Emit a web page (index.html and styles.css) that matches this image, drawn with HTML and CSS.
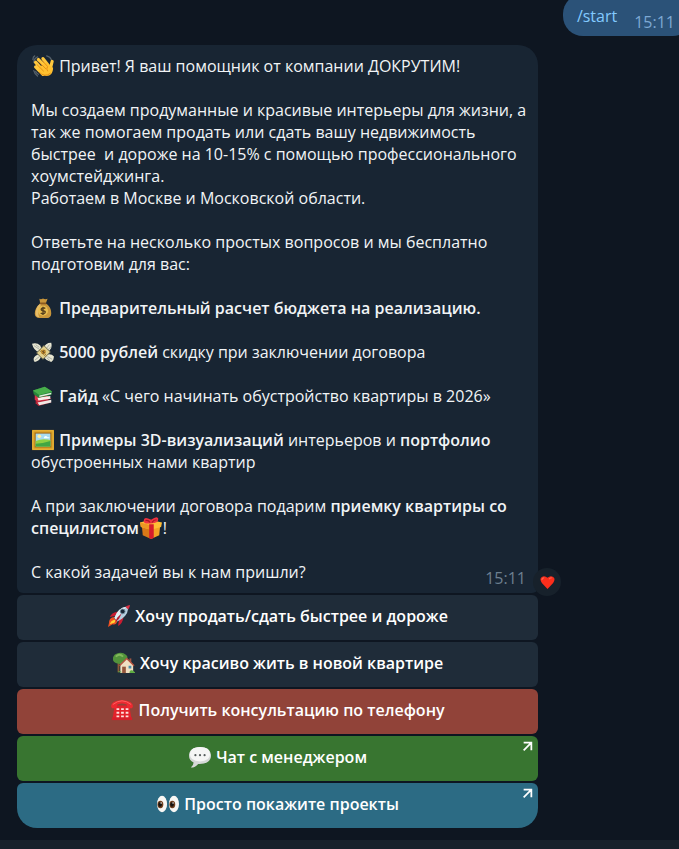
FILE: index.html
```
<!DOCTYPE html>
<html lang="ru">
<head>
<meta charset="utf-8">
<meta name="viewport" content="width=device-width, initial-scale=1">
<title>ДОКРУТИМ</title>
<link rel="stylesheet" href="styles.css">
</head>
<body>
<main class="chat">
  <div class="outgoing">
    <a class="command" href="#start">/start</a>
    <time class="time time-out">15:11</time>
  </div>

  <section class="incoming">
    <article class="bubble">
      <p><svg class="emoji" viewBox="0 0 24 24" aria-hidden="true"><path d="M2 8Q2 4 6 2M1 5Q1 2 3 1M16 1Q20 2 21 5M2 17Q3 21 6 23M4 18Q5 20 7 21" fill="none" stroke="#56616b" stroke-width="1.4" stroke-linecap="round"/><g fill="none" stroke="#ffc83d" stroke-width="3.6" stroke-linecap="round"><path d="M4 13l8 8M4 8l9 10M7 5l9 9M12 4l7 9"/><path d="M20 15l2-8" stroke-width="3.400"/></g><path d="M8 13l8-5 4 4 3 2c0 6-3 9-7 9-3 0-5-2-9-6z" fill="#ffc02f"/><path d="M5.500 10.500l7 7M7.500 7.500l7.500 7.500M11.500 6.500l5.500 6q-2 3 0 5M8 19q6 6 12 1" fill="none" stroke="#e48c15" stroke-width="1" stroke-linecap="round"/></svg> Привет! Я ваш помощник от компании ДОКРУТИМ!</p>
      <p>Мы создаем продуманные и красивые интерьеры для жизни, а так же помогаем продать или сдать вашу недвижимость быстрее&nbsp; и дороже на 10-15% с помощью профессионального хоумстейджинга.<br>Работаем в Москве и Московской области.</p>
      <p>Ответьте на несколько простых вопросов и мы бесплатно подготовим для вас:</p>
      <p><svg class="emoji" viewBox="0 0 24 24" aria-hidden="true"><path d="M8 2q2 1 4-.5 2 1.500 5 .5l-2 5c5 3 6 7 6 11 0 3-2 5-4 5H8c-3 0-5-2-5-5 0-4 2-8 6-11z" fill="#c9963b"/><path d="M9 7q-5 4-5 11 0 4 4 4Q5 17 10 8z" fill="#e6bd69"/><path d="M8.500 6h7v2h-7z" fill="#8b5a20"/><circle cx="12" cy="15" r="5.500" fill="#e9bd4f"/><path d="M14.500 12.500q-2-1.500-4 0-1.500 2 1.500 2.500 3.500.5 2 2.500-2 1.500-4.500 0M12 10.500v9" fill="none" stroke="#57401d" stroke-width="1.500"/></svg> <b>Предварительный расчет бюджета на реализацию.</b></p>
      <p><svg class="emoji" viewBox="0 0 24 24" aria-hidden="true"><path d="M0 3q5-2 9 2l2 5-3 2Q2 11 0 3zM13 8q1-6 8-6 2 6-4 10zM15 15q6-2 9 2 0 4-3 6-5-1-8-5zM10 17q-2 5-7 6-3-4 1-7l4-2z" fill="#e8e6d1"/><path d="M2 5l6 4M4 4l4 3M19 4l-4 5M21 6l-4 4M17 17l5 3M16 18l4 4M8 17l-5 4" fill="none" stroke="#a5aaa2" stroke-width="1"/><path d="M5 13l8-8 7 7-8 8z" fill="#e1cf8d" stroke="#6c694b"/><path d="M9 9l7 7M8 10l7 7" stroke="#997c38"/><circle cx="12.500" cy="12" r="2.700" fill="#c28c2d"/><path d="M13.500 10.500l-2 1 2 1-2 1" fill="none" stroke="#5b4322"/></svg> <b>5000 рублей</b> скидку при заключении договора</p>
      <p><svg class="emoji" viewBox="0 0 24 24" aria-hidden="true"><path d="M4 16l13-1 4 4-14 4-3-3z" fill="#b52234"/><path d="M6 19l15-3v3L8 22z" fill="#eee8e4"/><path d="M3 11l14 1 4 3-15 3-3-2z" fill="#d9344a"/><path d="M6 14l14-2v3L7 17z" fill="#f7efea"/><path d="M1 6L14 2l8 5-1 4-14 3-5-4z" fill="#26853a"/><path d="M1 6L14 2l8 5-14 4z" fill="#48ae4b"/><path d="M8 11.500l13-3v1.500L8 13z" fill="#e7eee1"/></svg> <b>Гайд</b> «С чего начинать обустройство квартиры в 2026»</p>
      <p><svg class="emoji" viewBox="0 0 24 24" aria-hidden="true"><path d="M0 1h24v22H0z" fill="#d39a25"/><path d="M1 2h22v20H1z" fill="none" stroke="#f1bd3e"/><path d="M3 4h18v16H3z" fill="#9c6617"/><path d="M4 5h16v14H4z" fill="#a8dcf0"/><circle cx="8" cy="8" r="2" fill="#fff1a5"/><path d="M13 9q2-3 4 0h2v1h-6z" fill="#f4ffff"/><path d="M4 13q7-3 16-1v7H4z" fill="#8fd143"/><path d="M4 16q7 0 16-3v6H4z" fill="#41a743"/></svg> <b>Примеры 3D-визуализаций</b> интерьеров и <b>портфолио</b> обустроенных нами квартир</p>
      <p>А при заключении договора подарим <b>приемку квартиры со специлистом</b><svg class="emoji" viewBox="0 0 24 24" aria-hidden="true"><path d="M2 9l10 3v12l-9-4z" fill="#d97918"/><path d="M12 12l10-3-1 11-9 4z" fill="#f4a125"/><path d="M0 6l11-3 13 3-1 5-11 3L1 11z" fill="#ffbd35"/><path d="M0 6l12 3v5L1 11z" fill="#ed9723"/><path d="M10 8h5v15l-3 1-2-1z" fill="#d61c2c"/><path d="M11 7Q4 8 4 4q0-5 8-1 7-5 8-1 0 5-8 5z" fill="#ef3340"/><path d="M6 4q3-1 5 2M18 3q-3 0-5 3" fill="none" stroke="#a51625" stroke-width="1.300"/></svg>!</p>
      <div class="closing">
        <p>С какой задачей вы к нам пришли?</p>
        <time class="time">15:11</time>
      </div>
      <button class="reaction" type="button" aria-label="Нравится"><svg class="heart" viewBox="0 0 16 16" aria-hidden="true"><path d="M8 15L2 8.500Q-1 4 2 2q3-2 6 1 3-3 6-1 3 2 0 6.500z" fill="#fb2e1c"/><path d="M2 5q0-2 2-2M10 4q1-1 2-1" fill="none" stroke="#ff7662" stroke-linecap="round"/></svg></button>
    </article>

    <div class="keyboard">
      <button class="key" type="button"><svg class="emoji" viewBox="0 0 24 24" aria-hidden="true"><path d="M1 20q0-6 5-7l4 5q-1 4-5 3l-5 3z" fill="#f05022"/><path d="M2 21q1-4 5-5l2 2q-2 2-4 2z" fill="#ffd232"/><path d="M11 7Q4 8 2 13l6-1zM17 13q-1 7-6 10l1-7z" fill="#c91c31"/><path d="M7 14Q11 3 20 2l2 2q-1 9-12 14z" fill="#b6cfdf"/><path d="M7 14Q11 3 20 2 15 7 9 16z" fill="#e4eff5"/><path d="M19 2q3-2 5-2 0 2-2 5z" fill="#dc3144"/><path d="M10 14l5-5-3 6-5 5z" fill="#b51c31"/><circle cx="16" cy="7" r="2.600" fill="#182635" stroke="#728d9f"/></svg> Хочу продать/сдать быстрее и дороже</button>
      <button class="key" type="button"><svg class="emoji" viewBox="0 0 24 24" aria-hidden="true"><path d="M5 10h2v12H5z" fill="#8a5b35"/><path d="M3 12Q-1 10 0 6q1-4 6-5 5-1 8 2 3 2 1 5-3 5-8 5z" fill="#52933b"/><path d="M3 5q4-4 8 0" fill="none" stroke="#82b85b" stroke-width="2"/><path d="M18 7h2v5h-2z" fill="#9f5743"/><path d="M8 13l7-6 7 7v9H8z" fill="#f0dfc2"/><path d="M7 15l8-8 8 8" fill="none" stroke="#b4533f" stroke-width="1.500"/><path d="M10 16h4v7h-4z" fill="#93553a"/><path d="M17 15h3v3h-3z" fill="#4a8baa"/><path d="M5 22q2-2 5 0M18 23q0-4 3-3l3 2v1z" fill="#5fae43"/></svg> Хочу красиво жить в новой квартире</button>
      <button class="key key-red" type="button"><svg class="emoji" viewBox="0 0 24 24" aria-hidden="true"><path d="M4 7h16l2 13v3H2v-3z" fill="#e3222b"/><path d="M0 8q0-6 12-7 12 1 12 7l-1 2h-5l-1-4Q12 4 7 6l-1 4H1z" fill="#ed2930"/><path d="M2 6q10-8 20 0" fill="none" stroke="#ff6563"/><path d="M1 20h22v3H1z" fill="#d51f2a"/><path d="M6 10h3v2H6zm5 0h3v2h-3zm5 0h3v2h-3zM6 14h3v2H6zm5 0h3v2h-3zm5 0h3v2h-3zM6 18h3v2H6zm5 0h3v2h-3zm5 0h3v2h-3z" fill="#ffe0dc"/></svg> Получить консультацию по телефону</button>
      <a class="key key-green" href="#manager"><svg class="emoji" viewBox="0 0 24 24" aria-hidden="true"><path d="M12 1C4 1 0 5 0 10.500q0 5 5 7.500 0 3-3 5.500 5 0 8-4C19 20 24 16 24 10.500 24 5 20 1 12 1z" fill="#d5d8d7"/><path d="M12 1C4 1 1 5 1 9q0 7 11 8 11-1 11-8 0-8-11-8z" fill="#f5f6f5"/><g fill="#555b5b"><circle cx="7" cy="10" r="1.200"/><circle cx="12" cy="10" r="1.200"/><circle cx="17" cy="10" r="1.200"/></g></svg> Чат с менеджером<svg class="arrow" viewBox="0 0 10 10" aria-hidden="true"><path d="M1.500 1.500h7v7M8.500 1.500L1.500 8.500" fill="none" stroke="currentColor" stroke-width="1.600"/></svg></a>
      <a class="key key-blue" href="#projects"><svg class="emoji" viewBox="0 0 24 24" aria-hidden="true"><ellipse cx="5.500" cy="12" rx="5.500" ry="9" fill="#f8f7f4"/><ellipse cx="18.500" cy="12" rx="5.500" ry="9" fill="#f8f7f4"/><ellipse cx="3.700" cy="12.500" rx="3.200" ry="4" fill="#71401f"/><ellipse cx="16.700" cy="12.500" rx="3.200" ry="4" fill="#71401f"/><ellipse cx="3.400" cy="12.500" rx="2" ry="2.500" fill="#171411"/><ellipse cx="16.400" cy="12.500" rx="2" ry="2.500" fill="#171411"/><circle cx="4.500" cy="11" r=".8" fill="#fff"/><circle cx="17.500" cy="11" r=".8" fill="#fff"/></svg> Просто покажите проекты<svg class="arrow" viewBox="0 0 10 10" aria-hidden="true"><path d="M1.500 1.500h7v7M8.500 1.500L1.500 8.500" fill="none" stroke="currentColor" stroke-width="1.600"/></svg></a>
    </div>
  </section>
</main>
<footer class="composer"></footer>
</body>
</html>
```
FILE: styles.css
```
* {
  box-sizing: border-box;
}

body {
  margin: 0;
  min-height: 100vh;
  display: flex;
  flex-direction: column;
  overflow: hidden;
  background: #0e1621;
  color: #f1f4f6;
  font: 16px/22px "Open Sans", "Noto Sans", sans-serif;
}

p {
  margin: 0;
}

b {
  font-weight: 600;
}

.chat {
  flex: 1;
  display: flex;
  flex-direction: column;
  gap: 9px;
  padding-bottom: 12px;
}

.outgoing {
  align-self: flex-end;
  display: flex;
  gap: 17px;
  height: 42px;
  margin-top: -6px;
  margin-right: -14px;
  padding: 11px 18px 0 14px;
  border-radius: 20px;
  background: #2b5278;
}

.command {
  color: #83caff;
  text-decoration: none;
}

.time {
  padding-top: 6px;
  color: #6d7f8f;
}

.time-out {
  color: #7da8d3;
}

.incoming {
  width: calc(100% - 34px);
  max-width: 521px;
  margin-left: 17px;
  display: flex;
  flex-direction: column;
  gap: 2px;
}

.bubble {
  position: relative;
  display: flex;
  flex-direction: column;
  gap: 22px;
  padding: 10px 8px 10px 14px;
  border-radius: 20px 20px 6px 6px;
  background: #182533;
}

.closing {
  display: flex;
  justify-content: space-between;
  height: 22px;
  padding-right: 4px;
}

.emoji {
  width: 22px;
  height: 22px;
  margin: 0 1px;
  vertical-align: -5px;
}

p .emoji {
  margin-top: -2px;
  margin-bottom: -2px;
}

.reaction {
  position: absolute;
  right: -23px;
  bottom: -3px;
  width: 28px;
  height: 28px;
  display: grid;
  place-items: center;
  padding: 0;
  border: 0;
  border-radius: 50%;
  background: #17212b;
}

.heart {
  width: 15px;
  height: 15px;
}

.keyboard {
  display: flex;
  flex-direction: column;
  gap: 2px;
}

.key {
  position: relative;
  height: 45px;
  padding: 0 12px 2px;
  border: 0;
  border-radius: 6px;
  background: #1f2c39;
  color: #ffffff;
  font: inherit;
  font-weight: 600;
  line-height: 43px;
  text-align: center;
  text-decoration: none;
}

.key-red {
  background: #914339;
}

.key-green {
  background: #387530;
}

.key-blue {
  border-radius: 6px 6px 20px 20px;
  background: #2c6b84;
}

.bubble .emoji {
  vertical-align: -3px;
}

.arrow {
  position: absolute;
  top: 5px;
  right: 5px;
  width: 11px;
  height: 11px;
}

.composer {
  flex: none;
  height: 9px;
  background: #17212b;
}
```
